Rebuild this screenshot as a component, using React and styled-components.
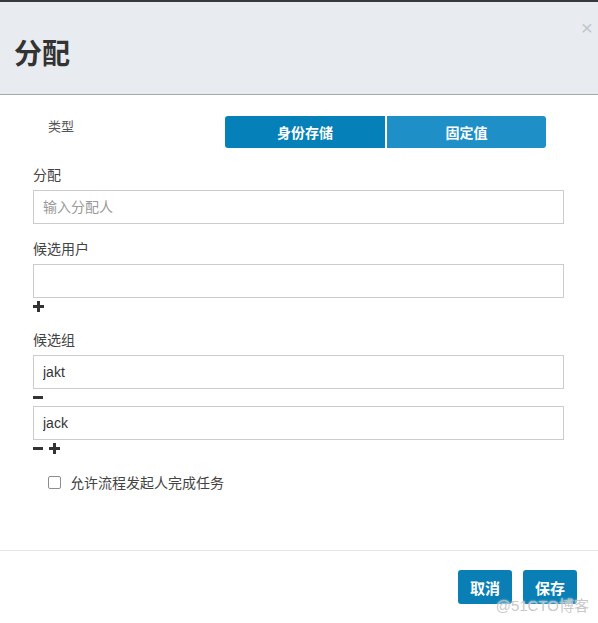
import React from "react";
import styled, { createGlobalStyle } from "styled-components";

const Global = createGlobalStyle`
  html, body { margin: 0; padding: 0; background: #fff; }
  body { font-family: "Liberation Sans", "Noto Sans CJK SC", sans-serif; color: #333; }
  * { box-sizing: border-box; }
`;

const Modal = styled.div`
  position: relative;
  width: 598px;
  height: 623px;
  background: #fff;
  overflow: hidden;
`;

const Header = styled.div`
  display: flex;
  justify-content: space-between;
  align-items: flex-start;
  height: 95px;
  border-top: 2px solid #34393e;
  border-bottom: 1px solid #a3aaaa;
  background: #e8ecf0;
  padding: 30px 5px 0 14px;
`;

const Title = styled.h1`
  margin: 0;
  font-family: "Noto Sans CJK SC", sans-serif;
  font-size: 28px;
  line-height: 40px;
  font-weight: 700;
  color: #333;
`;

const Close = styled.button`
  border: 0;
  background: none;
  padding: 0;
  margin-top: -14px;
  font-family: "Liberation Sans", sans-serif;
  font-size: 21px;
  line-height: 20px;
  color: #c2c6ca;
  cursor: pointer;
`;

const Body = styled.div`
  display: flex;
  flex-direction: column;
  padding: 21px 34px 58px 33px;
  border-bottom: 1px solid #e5e5e5;
`;

const TypeRow = styled.div`
  display: flex;
  align-items: flex-start;
  height: 32px;
  margin-bottom: 2px;
  padding-left: 15px;
`;

const TypeLabel = styled.span`
  width: 177px;
  font-family: "Noto Sans CJK SC", sans-serif;
  font-size: 13px;
  line-height: 20px;
  color: #555;
`;

const Segmented = styled.div`
  display: flex;
  gap: 2px;
`;

const SegButton = styled.button`
  width: ${(p) => (p.$first ? "160px" : "159px")};
  height: 32px;
  border: 0;
  border-radius: ${(p) => (p.$first ? "3px 0 0 3px" : "0 3px 3px 0")};
  background: ${(p) => (p.$active ? "#0680b8" : "#1e90c7")};
  color: #fff;
  font-family: "Noto Sans CJK SC", sans-serif;
  font-size: 14px;
  font-weight: 700;
  cursor: pointer;
`;

const Label = styled.label`
  display: block;
  margin: 14px 0 6px;
  font-family: "Noto Sans CJK SC", sans-serif;
  font-size: 14px;
  line-height: 20px;
  color: #444;
`;

const Input = styled.input`
  display: block;
  width: 531px;
  height: 34px;
  border: 1px solid #cccccc;
  border-radius: 0;
  padding: 0 9px;
  font-family: "Liberation Sans", "Noto Sans CJK SC", sans-serif;
  font-size: 14px;
  color: #333;
  outline: none;
  &::placeholder { color: #9a9a9a; font-family: "Noto Sans CJK SC", sans-serif; }
`;

const IconRow = styled.div`
  display: flex;
  align-items: center;
  gap: 5px;
  height: 17px;
`;

const IconBtn = styled.span`
  display: inline-flex;
  width: 11px;
  height: 11px;
  cursor: pointer;
`;

const Plus = () => (
  <IconBtn>
    <svg width="11" height="11" viewBox="0 0 11 11">
      <rect x="0" y="4" width="11" height="3" fill="#333" />
      <rect x="4" y="0" width="3" height="11" fill="#333" />
    </svg>
  </IconBtn>
);

const Minus = () => (
  <IconBtn>
    <svg width="11" height="11" viewBox="0 0 11 11">
      <rect x="0" y="4" width="10" height="3" fill="#333" />
    </svg>
  </IconBtn>
);

const CheckRow = styled.label`
  display: flex;
  align-items: center;
  margin-top: 15px;
  padding-left: 15px;
  font-family: "Noto Sans CJK SC", sans-serif;
  font-size: 14px;
  line-height: 20px;
  color: #444;
`;

const Check = styled.input`
  appearance: none;
  width: 13px;
  height: 13px;
  margin: 0 9px 0 0;
  border: 1px solid #8e8e8e;
  border-radius: 2px;
  background: #fff;
`;

const Footer = styled.div`
  display: flex;
  justify-content: flex-end;
  gap: 11px;
  padding: 19px 21px 0 0;
`;

const ActionButton = styled.button`
  width: 54px;
  height: 34px;
  border: 0;
  border-radius: 3px;
  background: #0a7fb5;
  color: #fff;
  font-family: "Noto Sans CJK SC", sans-serif;
  font-size: 15px;
  font-weight: 700;
  cursor: pointer;
`;

const Watermark = styled.div`
  position: absolute;
  right: 9px;
  bottom: 8px;
  font-family: "Liberation Sans", "Noto Sans CJK SC", sans-serif;
  font-size: 15px;
  color: rgba(190, 190, 190, 0.85);
  text-shadow: 0 0 2px #fff;
  pointer-events: none;
`;

export default function App() {
  return (
    <>
      <Global />
      <Modal>
        <Header>
          <Title>分配</Title>
          <Close aria-label="close">×</Close>
        </Header>
        <Body>
          <TypeRow>
            <TypeLabel>类型</TypeLabel>
            <Segmented>
              <SegButton $first $active>身份存储</SegButton>
              <SegButton>固定值</SegButton>
            </Segmented>
          </TypeRow>
          <Label>分配</Label>
          <Input placeholder="输入分配人" />
          <Label>候选用户</Label>
          <Input />
          <IconRow>
            <Plus />
          </IconRow>
          <Label>候选组</Label>
          <Input defaultValue="jakt" />
          <IconRow>
            <Minus />
          </IconRow>
          <Input defaultValue="jack" />
          <IconRow>
            <Minus />
            <Plus />
          </IconRow>
          <CheckRow>
            <Check type="checkbox" />
            允许流程发起人完成任务
          </CheckRow>
        </Body>
        <Footer>
          <ActionButton>取消</ActionButton>
          <ActionButton>保存</ActionButton>
        </Footer>
        <Watermark>@51CTO博客</Watermark>
      </Modal>
    </>
  );
}
